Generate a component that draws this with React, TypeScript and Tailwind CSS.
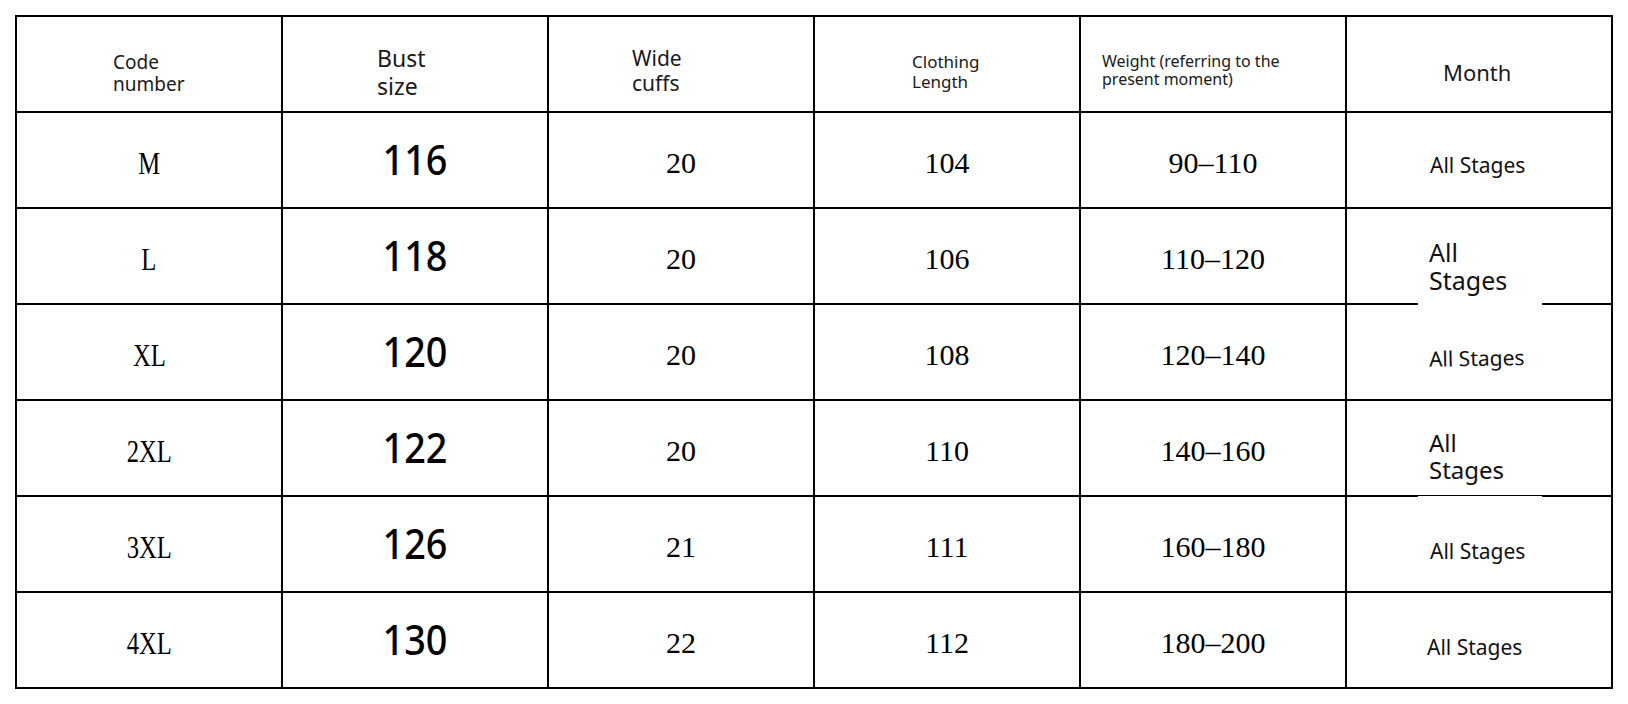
import React from "react";

const rows = [
  { code: "M", bust: "116", cuff: "20", len: "104", w: "90–110" },
  { code: "L", bust: "118", cuff: "20", len: "106", w: "110–120" },
  { code: "XL", bust: "120", cuff: "20", len: "108", w: "120–140" },
  { code: "2XL", bust: "122", cuff: "20", len: "110", w: "140–160" },
  { code: "3XL", bust: "126", cuff: "21", len: "111", w: "160–180" },
  { code: "4XL", bust: "130", cuff: "22", len: "112", w: "180–200" },
];

const sansCell = "h-[94px] bg-white font-['Noto_Sans','Open_Sans',sans-serif]";
const serifCell =
  "flex h-[94px] items-center justify-center bg-white pt-[6px] text-[30px] leading-none text-black font-['Liberation_Serif','DejaVu_Serif',serif]";

function MonthCell({ i }: { i: number }) {
  if (i === 0)
    return <div className={`${sansCell} pl-[83px] pt-[40px] text-[21px] leading-[24px] text-[#111]`}>All Stages</div>;
  if (i === 1)
    return (
      <div className={`${sansCell} relative pl-[82px] pt-[29px] text-[25px] leading-[28px] text-[#111]`}>
        <div>All</div>
        <div>Stages</div>
        <div className="absolute left-[71px] bottom-[-6px] h-[8px] w-[124px] bg-white" />
      </div>
    );
  if (i === 2)
    return (
      <div className={`${sansCell} pl-[82px] pt-[41px] text-[21px] leading-[24px] text-[#111]`}>
        <span className="inline-block -rotate-1">All Stages</span>
      </div>
    );
  if (i === 3)
    return (
      <div className={`${sansCell} relative pl-[82px] pt-[28px] text-[24px] leading-[27px] text-[#111]`}>
        <div>All</div>
        <div>Stages</div>
        <div className="absolute left-[71px] bottom-[-2px] h-[2px] w-[124px] bg-white">
          <div className="h-px w-full bg-black" />
        </div>
      </div>
    );
  if (i === 4)
    return <div className={`${sansCell} pl-[83px] pt-[42px] text-[21px] leading-[24px] text-[#111]`}>All Stages</div>;
  return <div className={`${sansCell} pl-[80px] pt-[42px] text-[21px] leading-[24px] text-[#111]`}>All Stages</div>;
}

export default function App() {
  return (
    <div className="h-[704px] w-[1628px] bg-white">
      <div className="pl-[15px] pt-[15px]">
        <div className="grid w-[1598px] grid-cols-6 gap-[2px] bg-black p-[2px]">
          <div className={`${sansCell} pl-[96px] pt-[34px] text-[19px] leading-[22px] text-[#1a1a1a]`}>
            <div>Code</div>
            <div>number</div>
          </div>
          <div className={`${sansCell} pl-[94px] pt-[27px] text-[23px] leading-[28px] text-[#1a1a1a]`}>
            <div>Bust</div>
            <div>size</div>
          </div>
          <div className={`${sansCell} pl-[83px] pt-[29px] text-[21px] leading-[25px] text-[#1a1a1a]`}>
            <div>Wide</div>
            <div>cuffs</div>
          </div>
          <div className={`${sansCell} pl-[97px] pt-[35px] text-[17px] leading-[20px] text-[#1a1a1a]`}>
            <div>Clothing</div>
            <div>Length</div>
          </div>
          <div className={`${sansCell} pl-[21px] pt-[35px] text-[16px] leading-[18px] text-[#1a1a1a]`}>
            <div>Weight (referring to the</div>
            <div>present moment)</div>
          </div>
          <div className={`${sansCell} pl-[96px] pt-[41px] text-[22px] leading-[28px] text-[#1a1a1a]`}>Month</div>

          {rows.map((r, i) => (
            <React.Fragment key={r.code}>
              <div className="flex h-[94px] items-center justify-center bg-white pt-[6px] text-black font-['Liberation_Serif','DejaVu_Serif',serif]">
                <span className="inline-block scale-x-[0.77] text-[32px] leading-none">{r.code}</span>
              </div>
              <div className="flex h-[94px] items-center justify-center bg-white pb-[3px] text-black font-['Noto_Sans','Open_Sans',sans-serif]">
                <span className="inline-block scale-x-[0.9] text-[42px] font-medium leading-none">{r.bust}</span>
              </div>
              <div className={serifCell}>{r.cuff}</div>
              <div className={serifCell}>{r.len}</div>
              <div className={serifCell}>{r.w}</div>
              <MonthCell i={i} />
            </React.Fragment>
          ))}
        </div>
      </div>
    </div>
  );
}
